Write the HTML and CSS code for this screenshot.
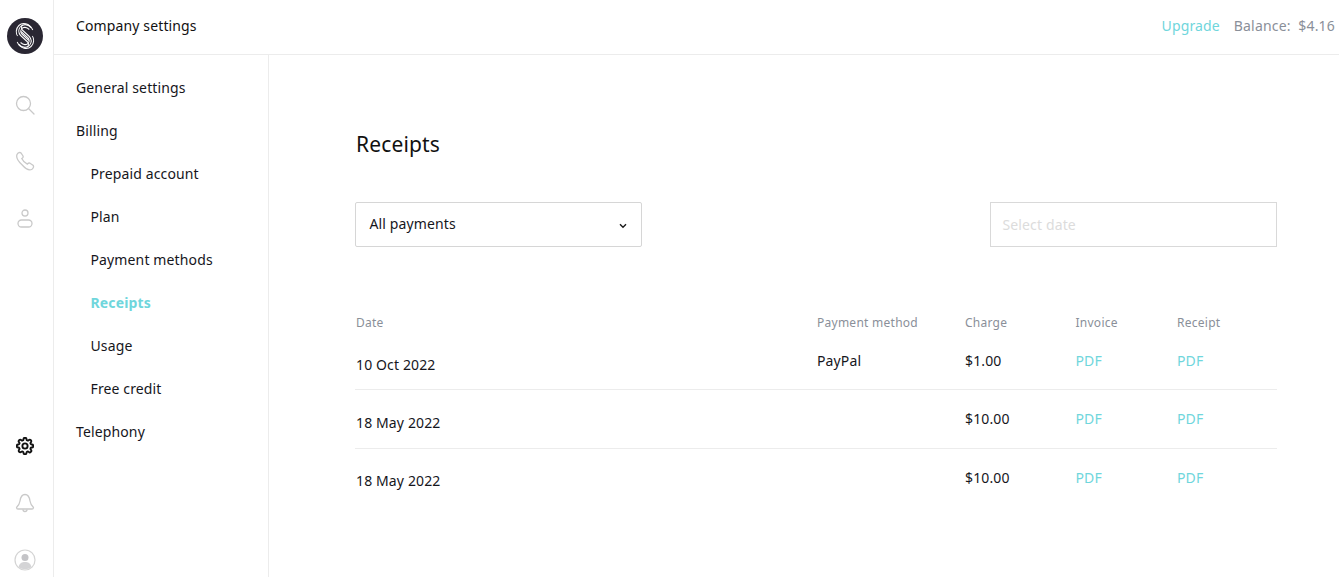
FILE: index.html
```html
<!DOCTYPE html>
<html lang="en">
<head>
<meta charset="utf-8">
<title>Receipts</title>
<link rel="stylesheet" href="styles.css">
</head>
<body>
<div class="app">
  <aside class="rail">
    <div class="rail-top">
      <svg class="logo" width="36" height="36" viewBox="0 0 36 36"><circle cx="18" cy="18" r="18" fill="#2a2733"/><g fill="none" stroke="#fff" stroke-width="1.100" transform="translate(2.300 0) scale(.87 1)"><path d="M25 9.500C21 5.500 15 6 12.500 9c-2.500 3-2 6 .5 8.500l8 6.500c2 2 1 4.500-1 5"/><path d="M27 12C23 5 15 4 11 7.500 7 11 7.500 15.500 9.500 18"/><path d="M23 11.500c-3-2.500-7-3-9-.5-1.500 2-1 4 1 5.500l7.500 6"/><path d="M11 26.500c4 4 10 3.500 12.500.5 2.500-3 2-6-.5-8.500l-8-6.500c-2-2-1-4.500 1-5"/><path d="M9 24c4 7 12 8 16 4.500 4-3.500 3.500-8 1.500-10.500"/><path d="M13 24.500c3 2.500 7 3 9 .5 1.500-2 1-4-1-5.500l-7.500-6"/></g></svg>
      <svg class="ico s1" width="20" height="20" viewBox="0 0 20 20" fill="none" stroke="#c9c9c9" stroke-width="1.300"><circle cx="8.500" cy="8.500" r="7"/><path d="M13.500 13.500l5.500 5.500" stroke-linecap="round"/></svg>
      <svg class="ico s2" width="20" height="20" viewBox="0 0 20 20" fill="none" stroke="#c9c9c9" stroke-width="1.300"><path d="M2 3.500C3 1.500 5 1 6 2l2 3c.5 1 0 1.700-1.200 2.500 1 2.200 3 4.500 5.500 5.700 1-1.200 1.700-1.500 2.700-1l3 2c1 1 .6 2.800-1 4-2.500 1.500-6.500-.5-10-4.500C3 10 1 6 2 3.500z"/></svg>
      <svg class="ico s3" width="16" height="20" viewBox="0 0 16 20" fill="none" stroke="#c9c9c9" stroke-width="1.300"><circle cx="8" cy="4" r="3"/><rect x="1" y="11" width="14" height="7" rx="3.500"/></svg>
    </div>
    <div class="rail-bottom">
      <svg class="ico" width="18" height="18" viewBox="0 0 24 24" fill="none" stroke="#111" stroke-width="2.500" stroke-linejoin="round"><circle cx="12" cy="12" r="3.500"/><path d="M19.400 15a1.700 1.700 0 0 0 .3 1.800l.1.100a2 2 0 1 1-2.900 2.900l-.1-.1a1.700 1.700 0 0 0-2.800 1.200V21a2 2 0 1 1-4 0v-.1a1.700 1.700 0 0 0-2.800-1.200l-.1.100a2 2 0 1 1-2.900-2.900l.1-.1a1.700 1.700 0 0 0-1.200-2.800H3a2 2 0 1 1 0-4h.1a1.700 1.700 0 0 0 1.200-2.800l-.1-.1a2 2 0 1 1 2.900-2.900l.1.100a1.700 1.700 0 0 0 2.800-1.200V3a2 2 0 1 1 4 0v.1a1.700 1.700 0 0 0 2.800 1.200l.1-.1a2 2 0 1 1 2.900 2.900l-.1.100a1.700 1.700 0 0 0 1.200 2.800h.1a2 2 0 1 1 0 4h-.1a1.700 1.700 0 0 0-1.500 1z"/></svg>
      <svg class="ico b2" width="20" height="20" viewBox="0 0 20 20" fill="none" stroke="#c9c9c9" stroke-width="1.300" stroke-linejoin="round"><path d="M10 1.500c-3 0-4.500 3-5 6.500-.4 3-2 5-3.500 6.500 0 1 .5 1.500 1.500 1.500h14c1 0 1.500-.5 1.500-1.500-1.500-1.500-3.100-3.500-3.500-6.500-.5-3.500-2-6.500-5-6.500z"/><path d="M8 16.500c0 1.500 1 2 2 2s2-.5 2-2"/></svg>
      <svg class="ico b3" width="22" height="22" viewBox="0 0 22 22"><circle cx="11" cy="11" r="10" fill="#fff" stroke="#d4d4d4" stroke-width="1.200"/><circle cx="11" cy="8.500" r="3.500" fill="#c4c4c7"/><path d="M4.500 18c1-4 3.500-5 6.500-5s5.500 1 6.500 5c-3.500 3-9.500 3-13 0z" fill="#d4d4d6"/></svg>
    </div>
  </aside>
  <div class="main">
    <header class="topbar">
      <div class="title">Company settings</div>
      <div class="top-right"><a class="upgrade">Upgrade</a><span class="balance">Balance:&nbsp; $4.16</span></div>
    </header>
    <div class="body">
      <nav class="side">
        <a class="nav">General settings</a>
        <a class="nav">Billing</a>
        <a class="nav sub">Prepaid account</a>
        <a class="nav sub">Plan</a>
        <a class="nav sub">Payment methods</a>
        <a class="nav sub active">Receipts</a>
        <a class="nav sub">Usage</a>
        <a class="nav sub">Free credit</a>
        <a class="nav">Telephony</a>
      </nav>
      <main class="content">
        <h1 class="heading">Receipts</h1>
        <div class="filters">
          <div class="select"><span>All payments</span>
            <svg width="8" height="6" viewBox="0 0 8 6" fill="none" stroke="#1a1a1a" stroke-width="1.400"><path d="M1 1.200l3 3 3-3"/></svg>
          </div>
          <div class="date">Select date</div>
        </div>
        <div class="table">
          <div class="row head"><div>Date</div><div>Payment method</div><div>Charge</div><div>Invoice</div><div>Receipt</div></div>
          <div class="row line first"><div class="d">10 Oct 2022</div><div>PayPal</div><div>$1.00</div><div class="pdf">PDF</div><div class="pdf">PDF</div></div>
          <div class="row line"><div class="d">18 May 2022</div><div></div><div>$10.00</div><div class="pdf">PDF</div><div class="pdf">PDF</div></div>
          <div class="row line last"><div class="d">18 May 2022</div><div></div><div>$10.00</div><div class="pdf">PDF</div><div class="pdf">PDF</div></div>
        </div>
      </main>
    </div>
  </div>
</div>
</body>
</html>
```

FILE: styles.css
```css
* { box-sizing: border-box; }
html, body { margin: 0; height: 100%; overflow: hidden; }
body { font-family: "Noto Sans", "Open Sans", sans-serif; font-size: 14px; letter-spacing: 0.13px; color: #16161c; background: #fff; }
.app { display: flex; height: 577px; }
.rail { width: 54px; flex: none; border-right: 1px solid #ececec; display: flex; flex-direction: column; justify-content: space-between; align-items: center; padding: 18px 3px 6px 0; }
.rail-top, .rail-bottom { display: flex; flex-direction: column; align-items: center; }
.ico { display: block; }
.s1 { margin-top: 41px; }
.s2 { margin-top: 36px; }
.s3 { margin-top: 38px; }
.b2 { margin-top: 38px; }
.b3 { margin-top: 36px; }
.main { flex: 1; display: flex; flex-direction: column; min-width: 0; }
.topbar { height: 55px; flex: none; border-bottom: 1px solid #ececec; display: flex; justify-content: space-between; align-items: center; padding: 0 4px 4px 22px; }
.title { font-size: 14px; color: #111; }
.top-right { display: flex; gap: 14px; }
.upgrade { color: #6fd6dc; }
.balance { color: #8a8f99; letter-spacing: 0.18px; }
.body { display: flex; flex: 1; min-height: 0; }
.side { width: 215px; flex: none; border-right: 1px solid #ececec; padding: 22px 0 0 22px; display: flex; flex-direction: column; }
.nav { height: 43px; line-height: 22px; color: #16161c; }
.sub { padding-left: 14.500px; }
.active { color: #6fd6dc; font-weight: 700; }
.content { flex: 1; padding: 74px 62px 0 86px; min-width: 0; }
.heading { margin: 0; padding-left: 1px; font-size: 21px; font-weight: 400; line-height: 30px; letter-spacing: 0.15px; color: #111; }
.filters { display: flex; justify-content: space-between; margin-top: 43px; }
.select { width: 287px; height: 45px; border: 1px solid #d6d6d6; border-radius: 2px; display: flex; align-items: center; justify-content: space-between; padding: 0 14px 0 13.500px; }
.select span { margin-top: -3px; }
.select svg { margin-top: 3px; }
.date { width: 287px; height: 45px; border: 1px solid #d9d9d9; padding: 0 11.500px; line-height: 44px; color: #dcdcdc; }
.table { margin-top: 65px; }
.row { display: grid; grid-template-columns: 461px 148px 110.500px 101.500px 1fr; padding: 0 0 0 1px; }
.head { font-size: 12px; letter-spacing: 0.26px; color: #8a8f99; line-height: 22px; height: 19px; }
.line { height: 59px; border-bottom: 1px solid #ececec; padding-top: 17px; line-height: 24px; }
.line.first { padding-top: 18px; }
.line.last { border-bottom: 0; }
.d { padding-top: 4px; }
.last .d { padding-top: 3px; }
.pdf { color: #6fd6dc; }
```
